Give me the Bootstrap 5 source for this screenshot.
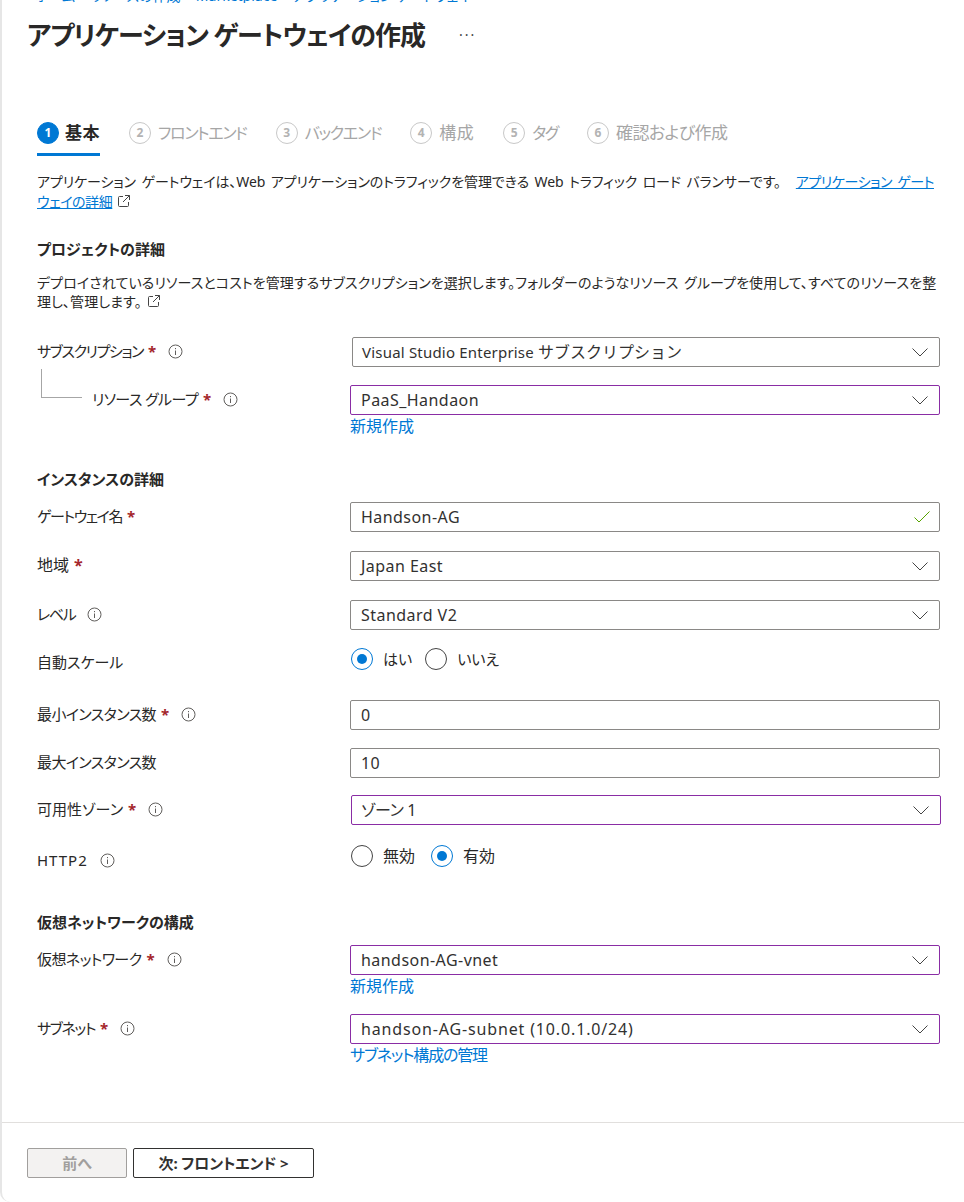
<!DOCTYPE html>
<html lang="ja">
<head>
    <meta charset="UTF-8">
    <meta name="viewport" content="width=device-width, initial-scale=1.0">
    <title>アプリケーション ゲートウェイの作成</title>
    <link href="https://cdn.jsdelivr.net/npm/bootstrap@5.3.0/dist/css/bootstrap.min.css" rel="stylesheet">
    <style>
        html, body { height: 100%; }
        body { background: #fff; color: #292827; font: 15px/20px "Noto Sans", "Noto Sans CJK JP", sans-serif; font-feature-settings: "palt"; }
        .blade { height: 1202px; overflow: hidden; border-left: 2px solid #e6e6e6; border-bottom-left-radius: 10px; display: flex; flex-direction: column; }
        .crumb-cut { height: 3px; overflow: hidden; padding-left: 33px; color: #0078d4; font-size: 14px; line-height: 14px; }
        .crumb-cut span { display: block; margin-top: -11px; white-space: nowrap; }
        .blade-title { font-size: 26px; font-weight: 700; line-height: 36px; margin: 14px 0 0 25px; color: #292827; letter-spacing: -1px; font-feature-settings: "palt"; }
        .more-dots { margin-left: 34px; font-size: 14px; color: #444; line-height: 36px; font-weight: 400; letter-spacing: 2px; }
        .blade-body { flex: 1; padding: 0 24px 0 35px; }
        .steps { margin-top: 60px; gap: 29px; height: 43px; }
        .step-tab { display: flex; align-items: flex-start; gap: 7px; height: 43px; padding-top: 9px; color: #a6a6a6; font-size: 17px; line-height: 22px; letter-spacing: -.6px; }
        .step-tab.kana { font-size: 16px; letter-spacing: -1.3px; }
        .step-tab.kanji { letter-spacing: .5px; }
        .step-tab.active { color: #292827; font-weight: 700; border-bottom: 3px solid #0078d4; letter-spacing: .5px; gap: 6px; }
        .step-num { width: 22px; height: 22px; border-radius: 50%; border: 1.5px solid #c8c8c8; font-size: 12px; font-weight: 700; line-height: 19px; text-align: center; color: #b3b3b3; flex: none; letter-spacing: 0; }
        .step-tab.active .step-num { background: #0078d4; border-color: #0078d4; color: #fff; }
        .intro { margin: 16px 0 0; font-size: 14px; letter-spacing: -.1px; word-spacing: 2px; }
        .azure-link { color: #0078d4; margin-left: 4px; letter-spacing: -.45px; }
        .ext-icon { width: 14px; height: 14px; margin-left: 5px; vertical-align: -1px; }
        .sec-head { font-size: 15px; font-weight: 700; line-height: 20px; margin: 0; }
        .sec-project { margin-top: 27px; }
        .sec-desc { margin: 14px 0 0; line-height: 19px; font-size: 14px; letter-spacing: .08px; word-spacing: 2px; }
        .form-line { display: flex; align-items: flex-start; }
        .form-label-cell { width: 313px; flex: none; display: flex; align-items: center; white-space: nowrap; padding-top: 4px; }
        .form-label-cell.tight-lg { letter-spacing: -1.4px; }
        .form-label-cell.tight-md { letter-spacing: -.6px; }
        .form-label-cell.wide-latin { letter-spacing: 1px; padding-top: 5px; }
        .form-label-cell.wide-cjk { font-size: 16px; }
        .form-field-cell { flex: 1; min-width: 0; }
        .req { color: #a4262c; margin-left: 5px; font-weight: 700; letter-spacing: 0; }
        .info-icon { width: 15px; height: 15px; margin-left: 12px; flex: none; }
        .az-box { height: 30px; border: 1px solid #8a8886; border-radius: 2px; padding: 0 9px 0 10px; display: flex; align-items: center; justify-content: space-between; background: #fff; font-size: 16px; letter-spacing: .45px; color: #323130; }
        .az-box.dirty { border-color: #8a2da5; }
        .az-box.narrow { margin-left: 2px; padding-left: 9px; font-size: 15px; letter-spacing: .2px; }
        .az-box.nudge { margin-left: 1px; margin-right: -1px; padding-left: 9px; letter-spacing: -.4px; }
        .az-box.long-value { letter-spacing: .85px; }
        .az-box svg { flex: none; }
        .az-box svg.chev { margin-right: 2px; }
        .cjk-full { font-size: 16px; font-feature-settings: normal; letter-spacing: 0; }
        .field-link { display: block; color: #0078d4; font-size: 16px; line-height: 20px; margin-top: 1px; text-decoration: none; }
        .field-link.squeeze { letter-spacing: -1.2px; }
        .indent-label { padding-left: 55px; position: relative; }
        .tree-line { position: absolute; left: 4px; top: -16px; width: 41px; height: 29px; border-left: 1px solid #a6a6a6; border-bottom: 1px solid #a6a6a6; }
        .radio-dot { width: 22px; height: 22px; border-radius: 50%; border: 1px solid #444; flex: none; background: #fff; position: relative; }
        .radio-dot.on { border-color: #0078d4; }
        .radio-dot.on::after { content: ""; position: absolute; inset: 5px; border-radius: 50%; background: #0078d4; }
        .radio-opt { display: flex; align-items: center; gap: 10px; }
        .radio-row { display: flex; gap: 13px; height: 22px; align-items: center; padding-left: 1px; }
        .radio-row.roomy { gap: 16px; font-size: 16px; }
        .row-first { margin-top: 26px; }
        .row-rg { margin-top: 18px; }
        .sec-inst { margin-top: 33px; }
        .row-after-head { margin-top: 13px; }
        .row-19 { margin-top: 19px; }
        .row-18 { margin-top: 18px; }
        .row-17 { margin-top: 17px; }
        .row-auto { margin-top: 18px; height: 44px; }
        .row-min { margin-top: 8px; }
        .row-http { margin-top: 20px; height: 46px; }
        .sec-vnet { margin-top: 21px; }
        .blade-foot { border-top: 1px solid #e1dfdd; height: 80px; padding: 25px 0 0 25px; display: flex; gap: 6px; }
        .az-btn { height: 30px; border-radius: 2px; font: 700 15px/28px "Noto Sans", "Noto Sans CJK JP", sans-serif; font-feature-settings: "palt"; padding: 0; background: #fff; border: 1px solid #323130; color: #323130; letter-spacing: -.15px; }
        .az-btn.prev { width: 100px; background: #f3f2f1; border-color: #a19f9d; color: #a19f9d; }
        .az-btn.next { width: 181px; }
    </style>
</head>
<body>
<div class="blade">
    <div class="crumb-cut"><span>ホーム &gt; リソースの作成 &gt; Marketplace &gt; アプリケーション ゲートウェイ</span></div>
    <h1 class="blade-title d-flex align-items-center">アプリケーション ゲートウェイの作成<span class="more-dots">···</span></h1>

    <div class="blade-body">
        <div class="steps d-flex">
            <div class="step-tab active"><span class="step-num">1</span>基本</div>
            <div class="step-tab kana"><span class="step-num">2</span>フロントエンド</div>
            <div class="step-tab kana"><span class="step-num">3</span>バックエンド</div>
            <div class="step-tab kanji"><span class="step-num">4</span>構成</div>
            <div class="step-tab kana"><span class="step-num">5</span>タグ</div>
            <div class="step-tab"><span class="step-num">6</span>確認および作成</div>
        </div>

        <p class="intro">アプリケーション ゲートウェイは、Web アプリケーションのトラフィックを管理できる Web トラフィック ロード バランサーです。 &nbsp;<a href="#" class="azure-link">アプリケーション ゲートウェイの詳細</a><svg class="ext-icon" viewBox="0 0 14 14" fill="none" stroke="#444" stroke-width="1"><path d="M6 2.5H2.5a1 1 0 0 0-1 1v8a1 1 0 0 0 1 1h8a1 1 0 0 0 1-1V8M8 1.5h4.5V6M12.5 1.5 6 8"/></svg></p>

        <h2 class="sec-head sec-project">プロジェクトの詳細</h2>
        <p class="sec-desc">デプロイされているリソースとコストを管理するサブスクリプションを選択します。フォルダーのようなリソース グループを使用して、すべてのリソースを整理し、管理します。<svg class="ext-icon" viewBox="0 0 14 14" fill="none" stroke="#444" stroke-width="1"><path d="M6 2.5H2.5a1 1 0 0 0-1 1v8a1 1 0 0 0 1 1h8a1 1 0 0 0 1-1V8M8 1.5h4.5V6M12.5 1.5 6 8"/></svg></p>

        <div class="form-line row-first">
            <div class="form-label-cell tight-lg">サブスクリプション<span class="req">*</span><svg class="info-icon" viewBox="0 0 15 15" fill="none" stroke="#605e5c"><circle cx="7.5" cy="7.5" r="6.5"/><path d="M7.5 6.5v4.5M7.5 4v1.2"/></svg></div>
            <div class="form-field-cell"><div class="az-box narrow"><span>Visual Studio Enterprise <span class="cjk-full">サブスクリプション</span></span><svg class="chev" width="16" height="9" viewBox="0 0 16 9" fill="none" stroke="#444"><path d="M.5.5 8 8l7.5-7.5"/></svg></div></div>
        </div>
        <div class="form-line row-rg">
            <div class="form-label-cell indent-label tight-md"><span class="tree-line"></span>リソース グループ<span class="req">*</span><svg class="info-icon" viewBox="0 0 15 15" fill="none" stroke="#605e5c"><circle cx="7.5" cy="7.5" r="6.5"/><path d="M7.5 6.5v4.5M7.5 4v1.2"/></svg></div>
            <div class="form-field-cell"><div class="az-box dirty">PaaS_Handaon<svg class="chev" width="16" height="9" viewBox="0 0 16 9" fill="none" stroke="#444"><path d="M.5.5 8 8l7.5-7.5"/></svg></div><a href="#" class="field-link">新規作成</a></div>
        </div>

        <h2 class="sec-head sec-inst">インスタンスの詳細</h2>
        <div class="form-line row-after-head">
            <div class="form-label-cell tight-lg">ゲートウェイ名<span class="req">*</span></div>
            <div class="form-field-cell"><div class="az-box">Handson-AG<svg width="16" height="12" viewBox="0 0 16 12" fill="none" stroke="#57a300"><path d="M.5 6.5 5 11 15.5.5"/></svg></div></div>
        </div>
        <div class="form-line row-19">
            <div class="form-label-cell wide-cjk">地域<span class="req">*</span></div>
            <div class="form-field-cell"><div class="az-box">Japan East<svg class="chev" width="16" height="9" viewBox="0 0 16 9" fill="none" stroke="#444"><path d="M.5.5 8 8l7.5-7.5"/></svg></div></div>
        </div>
        <div class="form-line row-19">
            <div class="form-label-cell tight-lg">レベル<svg class="info-icon" viewBox="0 0 15 15" fill="none" stroke="#605e5c"><circle cx="7.5" cy="7.5" r="6.5"/><path d="M7.5 6.5v4.5M7.5 4v1.2"/></svg></div>
            <div class="form-field-cell"><div class="az-box">Standard V2<svg class="chev" width="16" height="9" viewBox="0 0 16 9" fill="none" stroke="#444"><path d="M.5.5 8 8l7.5-7.5"/></svg></div></div>
        </div>
        <div class="form-line row-auto">
            <div class="form-label-cell">自動スケール</div>
            <div class="form-field-cell"><div class="radio-row"><div class="radio-opt"><span class="radio-dot on"></span>はい</div><div class="radio-opt"><span class="radio-dot"></span>いいえ</div></div></div>
        </div>
        <div class="form-line row-min">
            <div class="form-label-cell tight-md">最小インスタンス数<span class="req">*</span><svg class="info-icon" viewBox="0 0 15 15" fill="none" stroke="#605e5c"><circle cx="7.5" cy="7.5" r="6.5"/><path d="M7.5 6.5v4.5M7.5 4v1.2"/></svg></div>
            <div class="form-field-cell"><div class="az-box">0</div></div>
        </div>
        <div class="form-line row-18">
            <div class="form-label-cell tight-md">最大インスタンス数</div>
            <div class="form-field-cell"><div class="az-box">10</div></div>
        </div>
        <div class="form-line row-17">
            <div class="form-label-cell">可用性ゾーン<span class="req">*</span><svg class="info-icon" viewBox="0 0 15 15" fill="none" stroke="#605e5c"><circle cx="7.5" cy="7.5" r="6.5"/><path d="M7.5 6.5v4.5M7.5 4v1.2"/></svg></div>
            <div class="form-field-cell"><div class="az-box dirty nudge">ゾーン 1<svg class="chev" width="16" height="9" viewBox="0 0 16 9" fill="none" stroke="#444"><path d="M.5.5 8 8l7.5-7.5"/></svg></div></div>
        </div>
        <div class="form-line row-http">
            <div class="form-label-cell wide-latin">HTTP2<svg class="info-icon" viewBox="0 0 15 15" fill="none" stroke="#605e5c"><circle cx="7.5" cy="7.5" r="6.5"/><path d="M7.5 6.5v4.5M7.5 4v1.2"/></svg></div>
            <div class="form-field-cell"><div class="radio-row roomy"><div class="radio-opt"><span class="radio-dot"></span>無効</div><div class="radio-opt"><span class="radio-dot on"></span>有効</div></div></div>
        </div>

        <h2 class="sec-head sec-vnet">仮想ネットワークの構成</h2>
        <div class="form-line row-after-head">
            <div class="form-label-cell tight-md">仮想ネットワーク<span class="req">*</span><svg class="info-icon" viewBox="0 0 15 15" fill="none" stroke="#605e5c"><circle cx="7.5" cy="7.5" r="6.5"/><path d="M7.5 6.5v4.5M7.5 4v1.2"/></svg></div>
            <div class="form-field-cell"><div class="az-box dirty">handson-AG-vnet<svg class="chev" width="16" height="9" viewBox="0 0 16 9" fill="none" stroke="#444"><path d="M.5.5 8 8l7.5-7.5"/></svg></div><a href="#" class="field-link">新規作成</a></div>
        </div>
        <div class="form-line row-18">
            <div class="form-label-cell tight-lg">サブネット<span class="req">*</span><svg class="info-icon" viewBox="0 0 15 15" fill="none" stroke="#605e5c"><circle cx="7.5" cy="7.5" r="6.5"/><path d="M7.5 6.5v4.5M7.5 4v1.2"/></svg></div>
            <div class="form-field-cell"><div class="az-box dirty long-value">handson-AG-subnet (10.0.1.0/24)<svg class="chev" width="16" height="9" viewBox="0 0 16 9" fill="none" stroke="#444"><path d="M.5.5 8 8l7.5-7.5"/></svg></div><a href="#" class="field-link squeeze">サブネット構成の管理</a></div>
        </div>
    </div>

    <div class="blade-foot">
        <button class="az-btn prev" disabled>前へ</button>
        <button class="az-btn next">次: フロントエンド &gt;</button>
    </div>
</div>
<script src="https://cdn.jsdelivr.net/npm/bootstrap@5.3.0/dist/js/bootstrap.bundle.min.js"></script>
</body>
</html>
